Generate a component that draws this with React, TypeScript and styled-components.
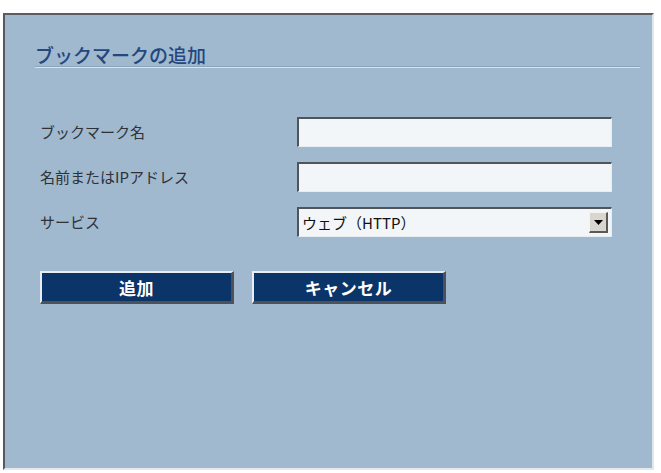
import React from "react";
import styled, { createGlobalStyle } from "styled-components";

const GlobalStyle = createGlobalStyle`
  html, body {
    margin: 0;
    padding: 0;
    background: #ffffff;
  }
  body {
    font-family: "Noto Sans CJK JP", "Noto Sans", sans-serif;
  }
`;

const Page = styled.div`
  padding: 13px 7px 3px 3px;
`;

const Panel = styled.section`
  box-sizing: border-box;
  width: 651px;
  height: 457px;
  background: #a0b9cf;
  border-style: solid;
  border-width: 2px 2px 2px 2px;
  border-color: #5a5e63 #dfe6ec #e4e9ee #55595e;
  padding: 29px 12px 0 30px;
  display: flex;
  flex-direction: column;
`;

const Title = styled.h1`
  margin: 0;
  font-size: 19px;
  font-weight: 500;
  line-height: 22px;
  color: #24477e;
  border-bottom: 1px solid #8aa4ba;
  box-shadow: 0 1px 0 #d8e3ec;
`;

const Form = styled.form`
  margin: 50px 0 0 5px;
  display: grid;
  grid-template-columns: 257px 315px;
  row-gap: 15px;
  align-items: center;
`;

const Label = styled.label`
  font-size: 15px;
  color: #2e3238;
  line-height: 20px;
`;

const Field = styled.div`
  box-sizing: border-box;
  height: 30px;
  background: #f3f6f9;
  border-style: solid;
  border-width: 2px 1px 1px 2px;
  border-color: #50555b #e8edf1 #e8edf1 #50555b;
  display: flex;
  align-items: center;
`;

const TextInput = styled.input`
  flex: 1;
  height: 100%;
  border: none;
  background: transparent;
  outline: none;
  padding: 0 4px;
  font-family: inherit;
  font-size: 14px;
`;

const SelectText = styled.span`
  flex: 1;
  padding-left: 3px;
  font-size: 15px;
  color: #111;
`;

const ArrowButton = styled.span`
  box-sizing: border-box;
  width: 19px;
  height: 21px;
  margin-right: 3px;
  background: #d8d6cf;
  border-style: solid;
  border-width: 1px 2px 2px 1px;
  border-color: #f4f3ef #5b5a56 #5b5a56 #f4f3ef;
  display: flex;
  align-items: center;
  justify-content: center;
`;

const Actions = styled.div`
  margin: 34px 0 0 5px;
  display: flex;
  gap: 18px;
`;

const ActionButton = styled.button`
  box-sizing: border-box;
  width: 194px;
  height: 33px;
  background: #0b3468;
  color: #ffffff;
  font-family: inherit;
  font-size: 17px;
  font-weight: 700;
  letter-spacing: 0.5px;
  border-style: solid;
  border-width: 2px 3px 3px 2px;
  border-color: #e6edf3 #4d5258 #4d5258 #e6edf3;
  padding: 0;
  cursor: pointer;
`;

export default function App() {
  return (
    <>
      <GlobalStyle />
      <Page>
        <Panel>
          <Title>ブックマークの追加</Title>
          <Form onSubmit={(e) => e.preventDefault()}>
            <Label htmlFor="bm-name">ブックマーク名</Label>
            <Field>
              <TextInput id="bm-name" />
            </Field>
            <Label htmlFor="bm-host">名前またはIPアドレス</Label>
            <Field>
              <TextInput id="bm-host" />
            </Field>
            <Label>サービス</Label>
            <Field>
              <SelectText>ウェブ（HTTP）</SelectText>
              <ArrowButton>
                <svg width="9" height="5" viewBox="0 0 9 5">
                  <path d="M0 0h9L4.5 5z" fill="#000" />
                </svg>
              </ArrowButton>
            </Field>
          </Form>
          <Actions>
            <ActionButton type="button">追加</ActionButton>
            <ActionButton type="button">キャンセル</ActionButton>
          </Actions>
        </Panel>
      </Page>
    </>
  );
}
